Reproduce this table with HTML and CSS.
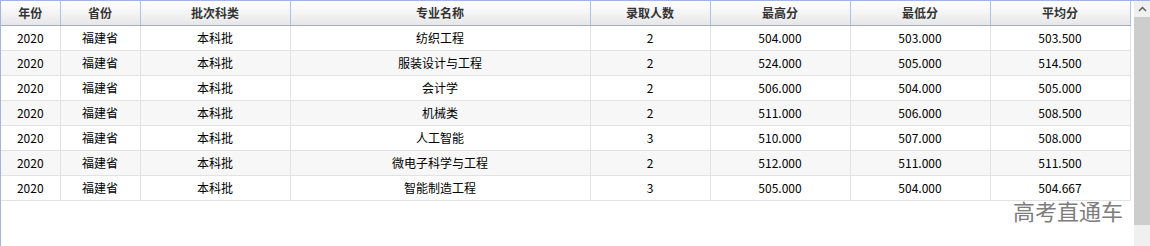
FILE: index.html
```html
<!DOCTYPE html>
<html lang="zh">
<head>
<meta charset="utf-8">
<link rel="stylesheet" href="styles.css">
</head>
<body>
<div class="frame">
  <div class="viewport">
    <table class="grid">
      <colgroup>
        <col class="c1"><col class="c2"><col class="c3"><col class="c4"><col class="c5"><col class="c6"><col class="c7"><col class="c8">
      </colgroup>
      <thead>
        <tr><th>年份</th><th>省份</th><th>批次科类</th><th>专业名称</th><th>录取人数</th><th>最高分</th><th>最低分</th><th>平均分</th></tr>
      </thead>
      <tbody>
        <tr><td>2020</td><td>福建省</td><td>本科批</td><td>纺织工程</td><td>2</td><td>504.000</td><td>503.000</td><td>503.500</td></tr>
        <tr><td>2020</td><td>福建省</td><td>本科批</td><td>服装设计与工程</td><td>2</td><td>524.000</td><td>505.000</td><td>514.500</td></tr>
        <tr><td>2020</td><td>福建省</td><td>本科批</td><td>会计学</td><td>2</td><td>506.000</td><td>504.000</td><td>505.000</td></tr>
        <tr><td>2020</td><td>福建省</td><td>本科批</td><td>机械类</td><td>2</td><td>511.000</td><td>506.000</td><td>508.500</td></tr>
        <tr><td>2020</td><td>福建省</td><td>本科批</td><td>人工智能</td><td>3</td><td>510.000</td><td>507.000</td><td>508.000</td></tr>
        <tr><td>2020</td><td>福建省</td><td>本科批</td><td>微电子科学与工程</td><td>2</td><td>512.000</td><td>511.000</td><td>511.500</td></tr>
        <tr><td>2020</td><td>福建省</td><td>本科批</td><td>智能制造工程</td><td>3</td><td>505.000</td><td>504.000</td><td>504.667</td></tr>
      </tbody>
    </table>
    <div class="watermark">高考直通车</div>
  </div>
  <div class="scrollbar">
    <div class="sb-btn">
      <svg width="9" height="6" viewBox="0 0 9 6"><path d="M1 5 L4.5 1.5 L8 5" fill="none" stroke="#606060" stroke-width="1.5"/></svg>
    </div>
    <div class="sb-thumb"></div>
    <div class="sb-rest"></div>
  </div>
</div>
</body>
</html>
```
FILE: styles.css
```css
html, body {
  margin: 0;
  padding: 0;
  background: #fff;
}
body {
  font-family: "Noto Sans CJK SC", "Liberation Sans", sans-serif;
  font-size: 12px;
  color: #000;
}
.frame {
  display: flex;
  width: 1150px;
  height: 246px;
  box-sizing: border-box;
  border-left: 1px solid #9fb4e0;
  border-top: 1px solid #9fb4e0;
}
.viewport {
  position: relative;
  flex: 1;
  overflow: hidden;
}
.grid {
  border-collapse: collapse;
  table-layout: fixed;
  width: 1129px;
}
.c1 { width: 59px; }
.c2 { width: 80px; }
.c3 { width: 150px; }
.c4 { width: 300px; }
.c5 { width: 120px; }
.c6 { width: 140px; }
.c7 { width: 140px; }
.c8 { width: 140px; }
.grid th {
  height: 24px;
  padding: 0;
  font-weight: bold;
  color: #333;
  background: linear-gradient(#ffffff, #f4f4f4 50%, #e6e6e6);
  border-right: 1px solid #a9c3ec;
  border-bottom: 1px solid #a4adbd;
  text-align: center;
  line-height: 22px;
}
.grid td {
  height: 24px;
  padding: 0;
  text-align: center;
  border-right: 1px solid #e2e2e2;
  border-bottom: 1px solid #e2e2e2;
  line-height: 22px;
}
.grid tbody tr:nth-child(even) td {
  background: #f7f7f7;
}
.watermark {
  position: absolute;
  left: 1012px;
  top: 193px;
  font-size: 22px;
  color: #7d7d7d;
}
.scrollbar {
  width: 16px;
  display: flex;
  flex-direction: column;
  background: #f0f0f0;
  margin-left: 1px;
}
.sb-btn {
  height: 16px;
  display: flex;
  align-items: center;
  justify-content: center;
}
.sb-thumb {
  height: 208px;
  background: #cdcdcd;
}
.sb-rest {
  flex: 1;
}
```
